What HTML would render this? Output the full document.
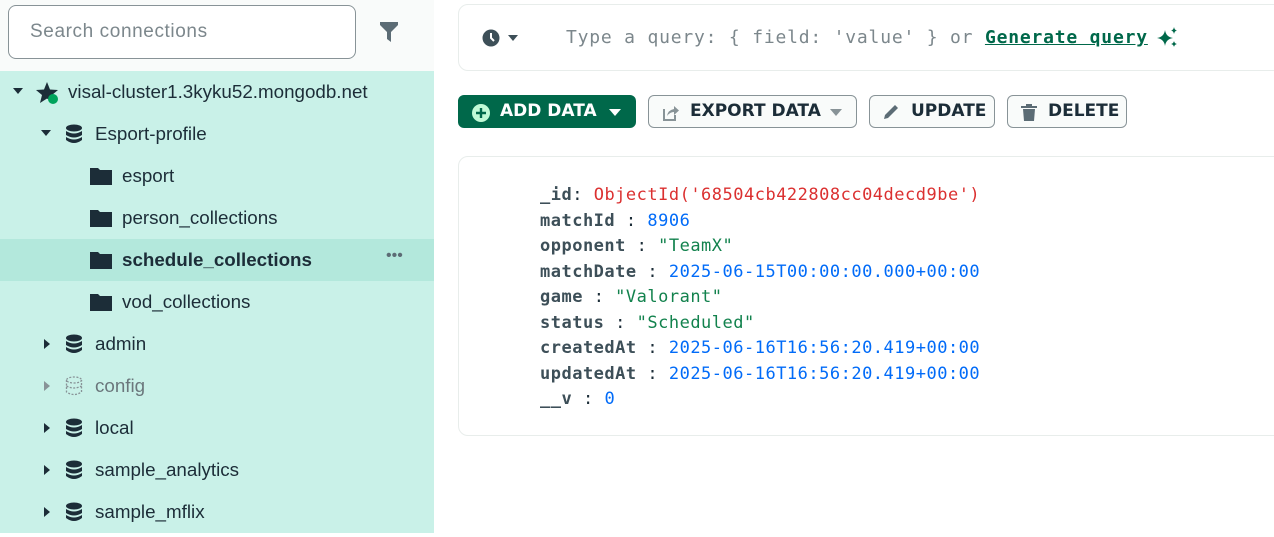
<!DOCTYPE html>
<html><head><meta charset="utf-8"><style>
*{box-sizing:border-box;margin:0;padding:0}
body{width:1274px;height:537px;background:#fff;position:relative;overflow:hidden;font-family:"Liberation Sans",sans-serif;color:#1c2d38}
#top{position:absolute;left:0;top:0;width:434px;height:71px;background:#f9fbfa}
#search{position:absolute;left:8px;top:5px;width:348px;height:54px;border:1px solid #889397;border-radius:8px;background:#fff;font-size:19px;letter-spacing:0.6px;color:#7c878c;padding:15px 0 0 21px}
#side{position:absolute;left:0;top:71px;width:434px;height:462px;background:#c9f1e8}
.row{position:absolute;left:0;width:434px;height:42px;font-size:18.8px;line-height:42px;color:#1c2d38}
.row svg{position:absolute}
.sel{background:#b3e8dc;font-weight:bold}
.q{position:absolute;left:458px;top:4px;width:830px;height:67px;border:1px solid #e8edeb;border-radius:10px}
.mono{font-family:"DejaVu Sans Mono","Liberation Mono",monospace}
.btn{position:absolute;top:95px;height:33px;border:1px solid #889397;border-radius:6px;background:#f9fbfa;font-family:"DejaVu Sans","Liberation Sans",sans-serif;font-weight:bold;font-size:17px;line-height:31px;color:#1c2d38}
.card{position:absolute;left:458px;top:156px;width:830px;height:280px;border:1px solid #e8edeb;border-radius:10px}
.doc{position:absolute;left:540px;top:183px;font-size:17px;line-height:25.5px;letter-spacing:0.5px;white-space:pre}
.k{font-weight:bold;color:#3d4f58}
.s{color:#12824d}.n{color:#016bf8}.o{color:#db3030}
</style></head><body>
<div id="top"></div>
<div id="search">Search connections</div>
<svg style="position:absolute;left:380px;top:22px" width="18" height="20" viewBox="0 0 18 20"><path d="M0 0H18V3L11 10V20L7 17V10L0 3Z" fill="#5c6c75"/></svg>
<div id="side">
<div class="row" style="top:0"><svg style="left:13px;top:17px" width="10" height="7"><path d="M0 0H10L5 6Z" fill="#1c2d38"/></svg>
<svg style="left:36px;top:10px" width="24" height="24" viewBox="0 0 24 24"><path d="M11 1L14 8.5L22 9L16 14L18 22L11 17.5L4 22L6 14L0 9L8 8.5Z" fill="#1c2d38"/><circle cx="17" cy="18" r="5" fill="#00a35c"/></svg>
<span style="position:absolute;left:68px">visal-cluster1.3kyku52.mongodb.net</span></div>
<div class="row" style="top:42px"><svg style="left:41px;top:17px" width="10" height="7"><path d="M0 0H10L5 6Z" fill="#1c2d38"/></svg>
<svg style="left:65px;top:11px" width="18" height="20" viewBox="0 0 18 20"><ellipse cx="9" cy="4" rx="8" ry="3.5" fill="#1c2d38"/><path d="M1 7Q9 12 17 7V11Q9 16 1 11Z M1 13Q9 18 17 13V16Q9 22 1 16Z" fill="#1c2d38"/></svg>
<span style="position:absolute;left:95px">Esport-profile</span></div>
<div class="row" style="top:84px"><svg style="left:90px;top:13px" width="22" height="17"><path d="M0 0H8L10 2H22V17H0Z" fill="#1c2d38"/></svg><span style="position:absolute;left:122px">esport</span></div>
<div class="row" style="top:126px"><svg style="left:90px;top:13px" width="22" height="17"><path d="M0 0H8L10 2H22V17H0Z" fill="#1c2d38"/></svg><span style="position:absolute;left:122px">person_collections</span></div>
<div class="row sel" style="top:168px"><svg style="left:90px;top:13px" width="22" height="17"><path d="M0 0H8L10 2H22V17H0Z" fill="#1c2d38"/></svg><span style="position:absolute;left:122px">schedule_collections</span><span style="position:absolute;left:386px;font-weight:normal;color:#5c6c75;font-size:16px;top:-4px">•••</span></div>
<div class="row" style="top:210px"><svg style="left:90px;top:13px" width="22" height="17"><path d="M0 0H8L10 2H22V17H0Z" fill="#1c2d38"/></svg><span style="position:absolute;left:122px">vod_collections</span></div>
<div class="row" style="top:252px"><svg style="left:44px;top:16px" width="7" height="10"><path d="M0 0V10L6 5Z" fill="#1c2d38"/></svg><svg style="left:65px;top:11px" width="18" height="20" viewBox="0 0 18 20"><ellipse cx="9" cy="4" rx="8" ry="3.5" fill="#1c2d38"/><path d="M1 7Q9 12 17 7V11Q9 16 1 11Z M1 13Q9 18 17 13V16Q9 22 1 16Z" fill="#1c2d38"/></svg><span style="position:absolute;left:95px">admin</span></div>
<div class="row" style="top:294px;color:#6b777c"><svg style="left:44px;top:16px" width="7" height="10"><path d="M0 0V10L6 5Z" fill="#889397"/></svg><svg style="left:65px;top:11px" width="18" height="20" viewBox="0 0 18 20"><g fill="none" stroke="#889397" stroke-width="1.3" stroke-dasharray="2 1.5"><ellipse cx="9" cy="4" rx="7.5" ry="3"/><path d="M1.5 4V16Q9 21 16.5 16V4M1.5 10Q9 14 16.5 10"/></g></svg><span style="position:absolute;left:95px">config</span></div>
<div class="row" style="top:336px"><svg style="left:44px;top:16px" width="7" height="10"><path d="M0 0V10L6 5Z" fill="#1c2d38"/></svg><svg style="left:65px;top:11px" width="18" height="20" viewBox="0 0 18 20"><ellipse cx="9" cy="4" rx="8" ry="3.5" fill="#1c2d38"/><path d="M1 7Q9 12 17 7V11Q9 16 1 11Z M1 13Q9 18 17 13V16Q9 22 1 16Z" fill="#1c2d38"/></svg><span style="position:absolute;left:95px">local</span></div>
<div class="row" style="top:378px"><svg style="left:44px;top:16px" width="7" height="10"><path d="M0 0V10L6 5Z" fill="#1c2d38"/></svg><svg style="left:65px;top:11px" width="18" height="20" viewBox="0 0 18 20"><ellipse cx="9" cy="4" rx="8" ry="3.5" fill="#1c2d38"/><path d="M1 7Q9 12 17 7V11Q9 16 1 11Z M1 13Q9 18 17 13V16Q9 22 1 16Z" fill="#1c2d38"/></svg><span style="position:absolute;left:95px">sample_analytics</span></div>
<div class="row" style="top:420px"><svg style="left:44px;top:16px" width="7" height="10"><path d="M0 0V10L6 5Z" fill="#1c2d38"/></svg><svg style="left:65px;top:11px" width="18" height="20" viewBox="0 0 18 20"><ellipse cx="9" cy="4" rx="8" ry="3.5" fill="#1c2d38"/><path d="M1 7Q9 12 17 7V11Q9 16 1 11Z M1 13Q9 18 17 13V16Q9 22 1 16Z" fill="#1c2d38"/></svg><span style="position:absolute;left:95px">sample_mflix</span></div>
</div>

<div class="q"></div>
<svg style="position:absolute;left:482px;top:29px" width="36" height="18"><circle cx="9" cy="9" r="8.5" fill="#3d4f58"/><path d="M9 4V9L12 12" stroke="#fff" stroke-width="2" fill="none"/><path d="M26 6H36L31 12Z" fill="#3d4f58"/></svg>
<div class="mono" style="position:absolute;left:566px;top:27px;font-size:18px;letter-spacing:0.8px;color:#7c878c;white-space:pre">Type a query: { field: 'value' } or <span style="color:#00684a;font-weight:bold;text-decoration:underline">Generate query</span></div>
<svg style="position:absolute;left:1157px;top:27px" width="22" height="22" viewBox="0 0 22 22"><path d="M8 3Q9 10 16 11Q9 12 8 19Q7 12 0 11Q7 10 8 3Z M17 0Q17.5 3 20 3.5Q17.5 4 17 7Q16.5 4 14 3.5Q16.5 3 17 0Z M17 14Q17.5 16.5 20 17Q17.5 17.5 17 20Q16.5 17.5 14 17Q16.5 16.5 17 14Z" fill="#00684a"/></svg>

<div class="btn" style="left:458px;width:178px;background:#00684a;border-color:#00684a;color:#fff">
<svg style="position:absolute;left:13px;top:8px" width="18" height="18"><circle cx="9" cy="9" r="9" fill="#c0fad6"/><path d="M9 4V14M4 9H14" stroke="#00684a" stroke-width="2.4"/></svg>
<span style="position:absolute;left:41px">ADD DATA</span><svg style="position:absolute;left:150px;top:13px" width="12" height="7"><path d="M0 0H12L6 7Z" fill="#fff"/></svg></div>
<div class="btn" style="left:648px;width:209px"><svg style="position:absolute;left:14px;top:9px" width="16" height="16"><path d="M1 4V15H12V10" stroke="#889397" stroke-width="2" fill="none"/><path d="M4 11Q5 5 11 4V1L16 5.5L11 10V7Q7 7 4 11Z" fill="#889397"/></svg><span style="position:absolute;left:41px">EXPORT DATA</span><svg style="position:absolute;left:181px;top:13px" width="12" height="7"><path d="M0 0H12L6 7Z" fill="#889397"/></svg></div>
<div class="btn" style="left:869px;width:126px"><svg style="position:absolute;left:12px;top:7px" width="18" height="18"><path d="M2 16L3 12L13 2L16 5L6 15Z" fill="#5c6c75"/></svg><span style="position:absolute;left:41px">UPDATE</span></div>
<div class="btn" style="left:1007px;width:120px"><svg style="position:absolute;left:12px;top:7px" width="18" height="19"><path d="M1 3H17V5H1Z M6 1H12V3H6Z M3 6H15L14 18H4Z" fill="#5c6c75"/></svg><span style="position:absolute;left:40px">DELETE</span></div>

<div class="card"></div>
<div class="doc mono"><span class="k">_id</span>: <span class="o">ObjectId('68504cb422808cc04decd9be')</span>
<span class="k">matchId</span> : <span class="n">8906</span>
<span class="k">opponent</span> : <span class="s">"TeamX"</span>
<span class="k">matchDate</span> : <span class="n">2025-06-15T00:00:00.000+00:00</span>
<span class="k">game</span> : <span class="s">"Valorant"</span>
<span class="k">status</span> : <span class="s">"Scheduled"</span>
<span class="k">createdAt</span> : <span class="n">2025-06-16T16:56:20.419+00:00</span>
<span class="k">updatedAt</span> : <span class="n">2025-06-16T16:56:20.419+00:00</span>
<span class="k">__v</span> : <span class="n">0</span></div>
</body></html>
